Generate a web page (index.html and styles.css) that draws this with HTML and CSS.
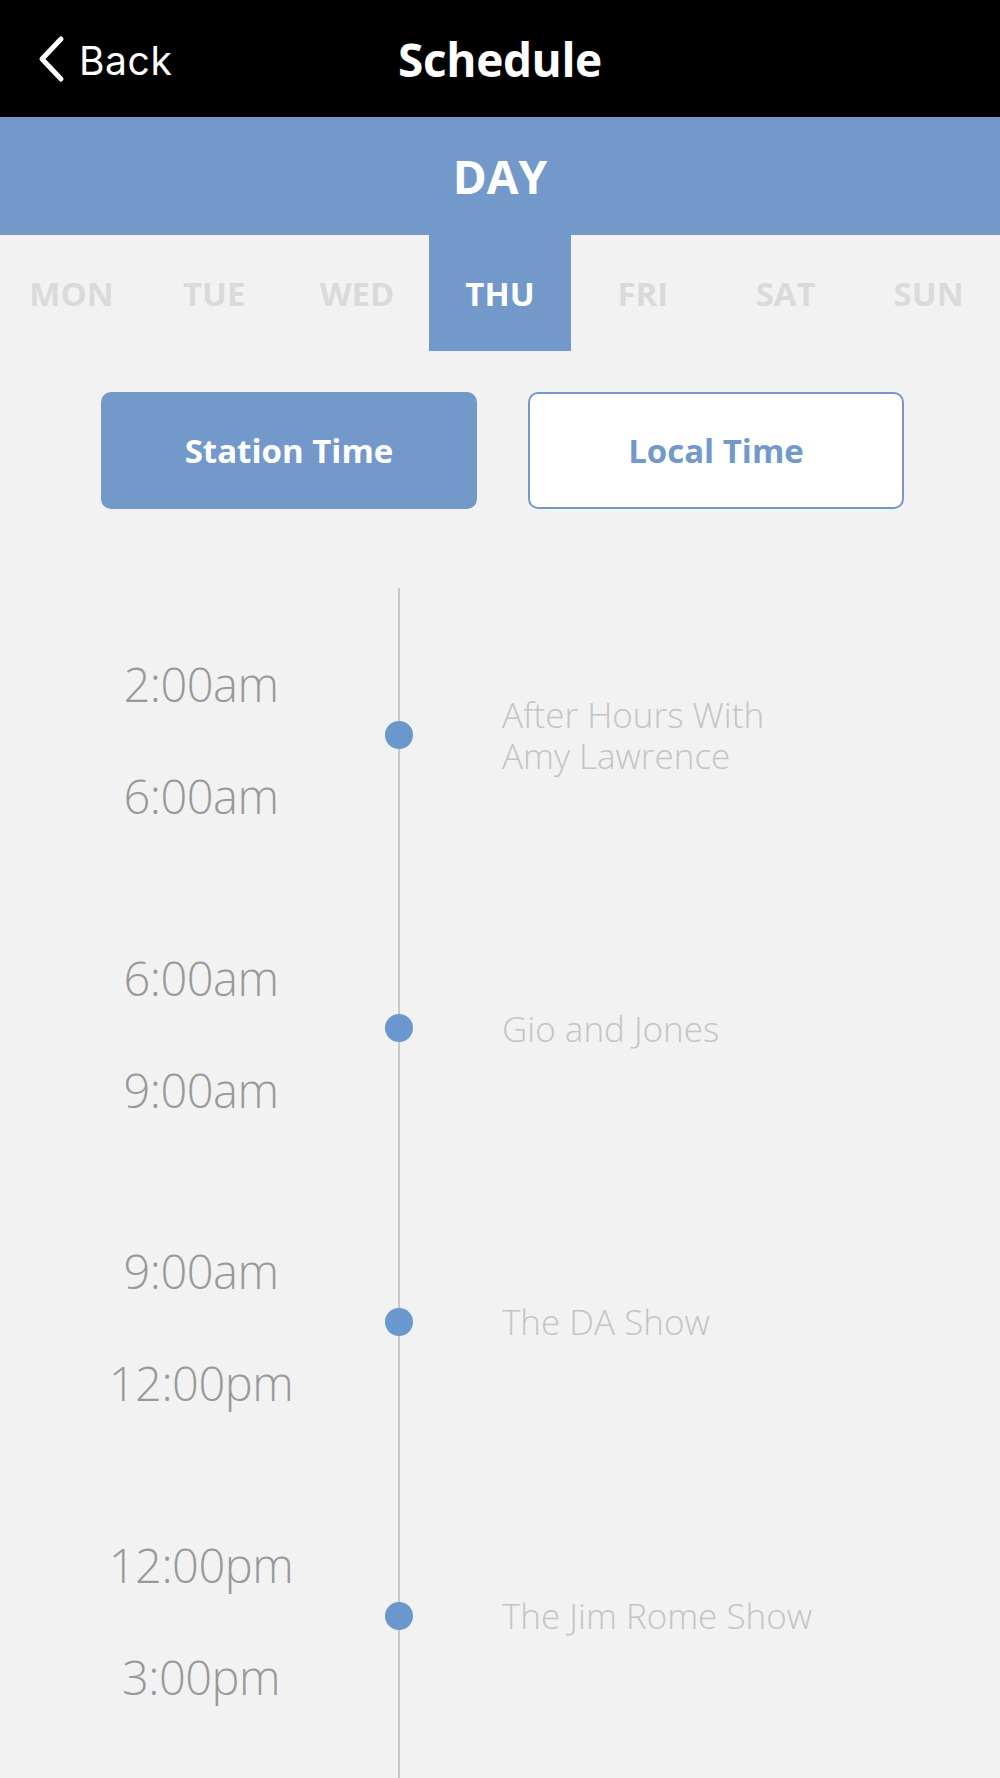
FILE: index.html
```html
<!DOCTYPE html>
<html lang="en">
  <head>
    <meta charset="UTF-8" />
    <meta name="viewport" content="width=device-width, initial-scale=1.0" />
    <title>Schedule</title>
    <link rel="stylesheet" href="styles.css">
  </head>
  <body>
    <header class="topbar">
      <a href="#" class="back">
        <svg class="chevron" viewBox="0 0 28 48" width="28" height="48">
          <path d="M24 4 L5 24 L24 44" fill="none" stroke="#fff" stroke-width="5" stroke-linecap="round" stroke-linejoin="round" />
        </svg>
        <span>Back</span>
      </a>
      <h1 class="title">Schedule</h1>
      <span></span>
    </header>

    <div class="day-bar">DAY</div>

    <nav class="days">
      <a href="#">MON</a>
      <a href="#">TUE</a>
      <a href="#">WED</a>
      <a href="#" class="active">THU</a>
      <a href="#">FRI</a>
      <a href="#">SAT</a>
      <a href="#">SUN</a>
    </nav>

    <div class="toggle">
      <button class="selected">Station Time</button>
      <button>Local Time</button>
    </div>

    <ul class="timeline">
      <li class="slot">
        <div class="times"><span>2:00am</span><span>6:00am</span></div>
        <div class="dot"></div>
        <div class="show">After Hours With Amy Lawrence</div>
      </li>
      <li class="slot">
        <div class="times"><span>6:00am</span><span>9:00am</span></div>
        <div class="dot"></div>
        <div class="show">Gio and Jones</div>
      </li>
      <li class="slot">
        <div class="times"><span>9:00am</span><span>12:00pm</span></div>
        <div class="dot"></div>
        <div class="show">The DA Show</div>
      </li>
      <li class="slot">
        <div class="times"><span>12:00pm</span><span>3:00pm</span></div>
        <div class="dot"></div>
        <div class="show">The Jim Rome Show</div>
      </li>
    </ul>
  </body>
</html>
```

FILE: styles.css
```css
body {
  margin: 0;
  padding: 0;
  background-color: #f2f2f2;
  font-family: "Open Sans", "Noto Sans", sans-serif;
  color: #999;
}
.topbar {
  display: grid;
  grid-template-columns: 1fr auto 1fr;
  align-items: center;
  height: 117px;
  background: #000;
  color: #fff;
}
.back {
  display: flex;
  align-items: center;
  gap: 14px;
  padding-left: 37px;
  color: #fff;
  text-decoration: none;
  font-family: Inter, "Liberation Sans", sans-serif;
  font-size: 39px;
  letter-spacing: 0.6px;
}
.back span {
  margin-top: 4px;
}
.title {
  margin: 0;
  font-size: 46px;
  font-weight: 700;
  letter-spacing: -0.4px;
}
.day-bar {
  height: 118px;
  line-height: 118px;
  text-align: center;
  background: #7399cb;
  color: #fff;
  font-size: 46px;
  font-weight: 700;
}
.days {
  display: grid;
  grid-template-columns: repeat(7, 1fr);
  height: 116px;
}
.days a {
  display: flex;
  align-items: center;
  justify-content: center;
  color: #dadada;
  text-decoration: none;
  font-size: 33px;
  font-weight: 700;
}
.days a.active {
  background: #7399cb;
  color: #fff;
}
.toggle {
  display: grid;
  grid-template-columns: 376px 376px;
  gap: 51px;
  padding: 41px 0 79px 101px;
}
.toggle button {
  height: 117px;
  border: 2px solid #7399cb;
  border-radius: 10px;
  background: #fff;
  color: #7399cb;
  font-family: inherit;
  font-size: 33px;
  font-weight: 700;
  cursor: pointer;
}
.toggle button.selected {
  background: #7399cb;
  color: #fff;
}
.timeline {
  list-style: none;
  margin: 0;
  padding: 0 0 60px;
  background: linear-gradient(#c8c8c8, #c8c8c8) 398px 0 / 2px 100% no-repeat;
}
.slot {
  display: grid;
  grid-template-columns: 385px 28px 1fr;
  align-items: center;
  height: 293.6px;
}
.times {
  display: flex;
  flex-direction: column;
  align-items: center;
  align-self: start;
  padding: 40px 0 0 17px;
  font-size: 47px;
  font-weight: 300;
  line-height: 112px;
  letter-spacing: -0.5px;
  color: #999;
}
.dot {
  width: 28px;
  height: 28px;
  border-radius: 50%;
  background: #6b97cf;
}
.show {
  max-width: 330px;
  padding-left: 89px;
  font-size: 35px;
  font-weight: 300;
  line-height: 41px;
  color: #c4c4c4;
}
```
